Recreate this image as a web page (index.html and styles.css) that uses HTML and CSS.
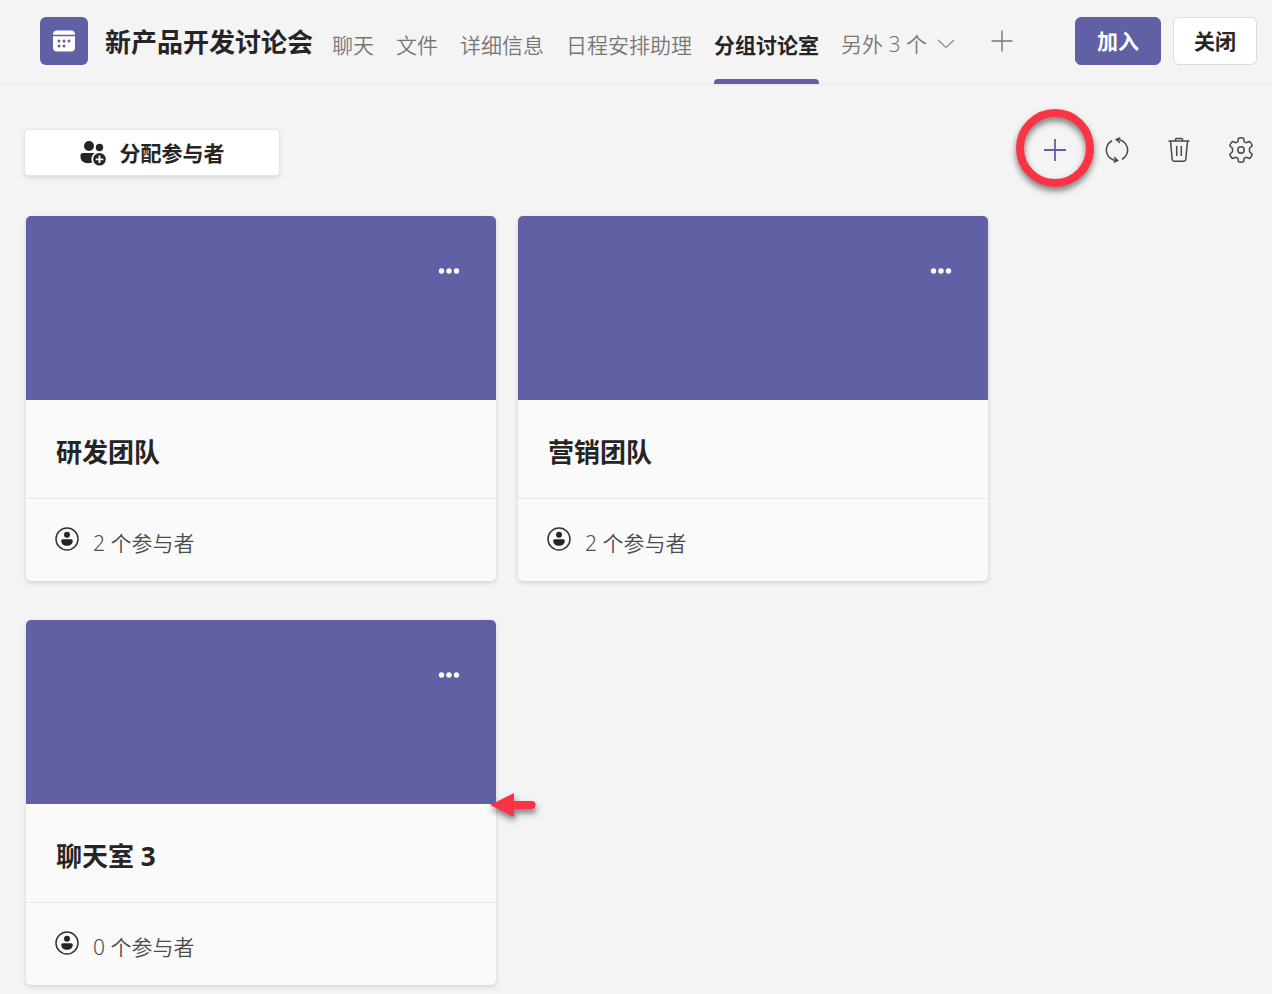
FILE: index.html
```html
<!DOCTYPE html>
<html lang="zh-CN">
<head>
<meta charset="utf-8">
<meta name="viewport" content="width=device-width, initial-scale=1">
<title>新产品开发讨论会</title>
<link rel="stylesheet" href="styles.css">
</head>
<body>
<header class="topbar">
  <span class="meeting-icon">
    <svg width="22" height="22" viewBox="0 0 22 22" aria-hidden="true">
      <path fill="#fff" d="M0 4.500A4 4 0 0 1 4 .5h14a4 4 0 0 1 4 4v.2H0zM0 6.200h22V17.500a4 4 0 0 1-4 4H4a4 4 0 0 1-4-4z"/>
      <g fill="#6260a5"><circle cx="6" cy="11" r="1.500"/><circle cx="11" cy="11" r="1.500"/><circle cx="16" cy="11" r="1.500"/><circle cx="6" cy="16" r="1.500"/><circle cx="11" cy="16" r="1.500"/></g>
    </svg>
  </span>
  <h1 class="meeting-title">新产品开发讨论会</h1>
  <nav class="tabs">
    <a class="tab" href="#chat">聊天</a>
    <a class="tab" href="#files">文件</a>
    <a class="tab" href="#details">详细信息</a>
    <a class="tab" href="#scheduling">日程安排助理</a>
    <a class="tab tab-active" href="#rooms" aria-current="page">分组讨论室</a>
    <button class="tab tab-more" type="button">另外 3 个
      <svg width="18" height="10" viewBox="0 0 18 10" aria-hidden="true"><path d="M1 1l8 7.500L17 1" fill="none" stroke="#8a8a8a" stroke-width="1.200"/></svg>
    </button>
  </nav>
  <button class="add-tab" type="button" aria-label="添加选项卡">
    <svg width="22" height="22" viewBox="0 0 22 22" aria-hidden="true"><path d="M11 .5v21M.5 11h21" stroke="#777" stroke-width="1.400"/></svg>
  </button>
  <div class="actions">
    <button class="btn btn-primary" type="button">加入</button>
    <button class="btn" type="button">关闭</button>
  </div>
</header>
<main class="content">
  <div class="toolbar">
    <button class="assign" type="button">
      <svg width="26" height="26" viewBox="0 0 26 26" aria-hidden="true" fill="#252525">
        <circle cx="9" cy="6" r="5"/><circle cx="19.500" cy="7.500" r="3.700"/>
        <path d="M3 13h11.500a7.500 7.500 0 0 0-2.300 9.600C6 24.500.5 22 .5 17v-1.500A2.500 2.500 0 0 1 3 13z"/>
        <path fill-rule="evenodd" d="M19.500 13a6.300 6.300 0 1 1 0 12.600 6.300 6.300 0 0 1 0-12.600zM18.600 15.500v2.900h-2.900v1.800h2.900v2.900h1.800v-2.900h2.900v-1.800h-2.900v-2.900z"/>
      </svg>
      <span>分配参与者</span>
    </button>
    <div class="tools">
      <button class="tool tool-marked" type="button" aria-label="添加讨论室">
        <svg width="24" height="24" viewBox="0 0 24 24" aria-hidden="true"><path d="M12 1v22M1 12h22" stroke="#6260a5" stroke-width="1.800"/></svg>
        <span class="ring"></span>
      </button>
      <button class="tool" type="button" aria-label="重新创建">
        <svg width="24" height="26" viewBox="0 0 24 26" aria-hidden="true" fill="none" stroke="#484848" stroke-width="1.500" stroke-linecap="round"><path d="M6.500 4A10.500 10.500 0 0 0 12.500 23.500M9.500 20.500l3.200 3-3.500 1.700M17.500 22A10.500 10.500 0 0 0 11.500 2.500M14.500 5.500l-3.200-3 3.500-1.700"/></svg>
      </button>
      <button class="tool" type="button" aria-label="删除讨论室">
        <svg width="24" height="26" viewBox="0 0 24 26" aria-hidden="true" fill="none" stroke="#484848" stroke-width="1.500" stroke-linejoin="round"><path d="M1.500 4h21M8.500 4V2.500A1 1 0 0 1 9.500 1.500h5a1 1 0 0 1 1 1V4M3.500 4l1.700 18.500A2 2 0 0 0 7.200 24.300h9.600a2 2 0 0 0 2-1.800L20.500 4M9.700 9v10M14.300 9v10"/></svg>
      </button>
      <button class="tool" type="button" aria-label="讨论室设置">
        <svg width="26" height="26" viewBox="0 0 26 26" aria-hidden="true" fill="none" stroke="#484848" stroke-width="1.500" stroke-linejoin="round"><path d="M10.500 1.200Q13 .5 15.500 1.200L16.200 4.800 18 5.700 21.700 4.500Q23.500 6.300 24.200 8.800L21.500 11.300V14.700L24.200 17.200Q23.500 19.700 21.700 21.500L18 20.300 16.200 21.200 15.500 24.800Q13 25.500 10.500 24.800L9.800 21.200 8 20.300 4.300 21.500Q2.500 19.700 1.800 17.200L4.500 14.700V11.300L1.800 8.800Q2.500 6.300 4.300 4.500L8 5.700 9.800 4.800z"/><circle cx="13" cy="13" r="3.200"/></svg>
      </button>
    </div>
  </div>
  <section class="rooms">
    <article class="room">
      <div class="cover"><button class="more" type="button" aria-label="更多选项"><svg width="22" height="6" viewBox="0 0 22 6" aria-hidden="true" fill="#fff"><circle cx="3.500" cy="3" r="2.700"/><circle cx="11" cy="3" r="2.700"/><circle cx="18.500" cy="3" r="2.700"/></svg></button></div>
      <h2 class="room-name">研发团队</h2>
      <p class="people"><svg width="24" height="24" viewBox="0 0 24 24" aria-hidden="true"><circle cx="12" cy="12" r="11" fill="none" stroke="#333" stroke-width="1.500"/><circle cx="12" cy="7.800" r="3" fill="#252525"/><path fill="#252525" d="M7.800 12.200h8.400a1.600 1.600 0 0 1 1.600 1.600c0 3-2.400 5-5.800 5s-5.800-2-5.800-5a1.600 1.600 0 0 1 1.600-1.600z"/></svg><span class="count">2 个参与者</span></p>
    </article>
    <article class="room">
      <div class="cover"><button class="more" type="button" aria-label="更多选项"><svg width="22" height="6" viewBox="0 0 22 6" aria-hidden="true" fill="#fff"><circle cx="3.500" cy="3" r="2.700"/><circle cx="11" cy="3" r="2.700"/><circle cx="18.500" cy="3" r="2.700"/></svg></button></div>
      <h2 class="room-name">营销团队</h2>
      <p class="people"><svg width="24" height="24" viewBox="0 0 24 24" aria-hidden="true"><circle cx="12" cy="12" r="11" fill="none" stroke="#333" stroke-width="1.500"/><circle cx="12" cy="7.800" r="3" fill="#252525"/><path fill="#252525" d="M7.800 12.200h8.400a1.600 1.600 0 0 1 1.600 1.600c0 3-2.400 5-5.800 5s-5.800-2-5.800-5a1.600 1.600 0 0 1 1.600-1.600z"/></svg><span class="count">2 个参与者</span></p>
    </article>
    <article class="room">
      <div class="cover"><button class="more" type="button" aria-label="更多选项"><svg width="22" height="6" viewBox="0 0 22 6" aria-hidden="true" fill="#fff"><circle cx="3.500" cy="3" r="2.700"/><circle cx="11" cy="3" r="2.700"/><circle cx="18.500" cy="3" r="2.700"/></svg></button></div>
      <h2 class="room-name">聊天室 3</h2>
      <p class="people"><svg width="24" height="24" viewBox="0 0 24 24" aria-hidden="true"><circle cx="12" cy="12" r="11" fill="none" stroke="#333" stroke-width="1.500"/><circle cx="12" cy="7.800" r="3" fill="#252525"/><path fill="#252525" d="M7.800 12.200h8.400a1.600 1.600 0 0 1 1.600 1.600c0 3-2.400 5-5.800 5s-5.800-2-5.800-5a1.600 1.600 0 0 1 1.600-1.600z"/></svg><span class="count">0 个参与者</span></p>
      <svg class="pointer" width="46" height="26" viewBox="0 0 46 26" aria-hidden="true"><path fill="#fa3445" d="M0 13L24 1v8h17.500a4 4 0 0 1 0 8H24v8z"/></svg>
    </article>
  </section>
</main>
</body>
</html>
```
FILE: styles.css
```css
* { box-sizing: border-box; }

body {
  margin: 0;
  background: #f5f4f5;
  color: #252525;
  font-family: "Noto Sans", "Noto Sans CJK SC", sans-serif;
  font-size: 21px;
  line-height: 28px;
}

button {
  margin: 0;
  padding: 0;
  border: 0;
  background: none;
  color: inherit;
  font: inherit;
  cursor: pointer;
}

svg { display: block; flex: none; }

.topbar {
  display: flex;
  align-items: center;
  min-height: 85px;
  padding: 0 15px 2px 40px;
  border-bottom: 1px solid #e9e7e9;
}

.meeting-icon {
  display: grid;
  place-items: center;
  width: 48px;
  height: 48px;
  flex: none;
  border-radius: 6px;
  background: #6260a5;
}

.meeting-title {
  margin: 0 19px 0 17px;
  padding-top: 2px;
  font-size: 26px;
  line-height: 36px;
  font-weight: 700;
  white-space: nowrap;
}

.tabs {
  display: flex;
  align-self: stretch;
  gap: 22px;
  margin-bottom: -2px;
}

.tab {
  position: relative;
  display: flex;
  align-items: center;
  padding-top: 5px;
  color: #777677;
  font-weight: 350;
  text-decoration: none;
  white-space: nowrap;
}

.tab-active {
  color: #252525;
  font-weight: 700;
}

.tab-active::after {
  content: "";
  position: absolute;
  left: 0;
  right: 0;
  bottom: 0;
  height: 5px;
  border-radius: 4px 4px 0 0;
  background: #6260a5;
}

.tab-more {
  gap: 10px;
  padding-top: 4px;
}

.add-tab { margin-left: 36px; }

.actions {
  display: flex;
  gap: 12px;
  margin-left: auto;
}

.btn {
  width: 84px;
  height: 48px;
  border: 1px solid #dddcdd;
  border-radius: 6px;
  background: #fff;
  font-weight: 700;
}

.btn-primary {
  width: 86px;
  border-color: #6260a5;
  background: #6260a5;
  color: #fff;
}

.content { padding: 44px 15px 8px 24px; }

.toolbar {
  display: flex;
  justify-content: space-between;
  align-items: flex-start;
}

.assign {
  display: flex;
  align-items: center;
  justify-content: center;
  gap: 14px;
  width: 256px;
  height: 47px;
  border: 1px solid #e6e5e6;
  border-radius: 4px;
  background: #fff;
  box-shadow: 0 2px 4px rgba(0, 0, 0, 0.1);
  font-weight: 700;
}

.tools { display: flex; gap: 30px; }

.tool {
  position: relative;
  display: grid;
  place-items: center;
  width: 32px;
  height: 42px;
}

.ring {
  position: absolute;
  top: -20px;
  left: -23px;
  width: 78px;
  height: 78px;
  border: 8px solid #fa3445;
  border-radius: 50%;
  filter: drop-shadow(0 4px 3px rgba(0, 0, 0, 0.5));
}

.rooms {
  display: grid;
  grid-template-columns: repeat(auto-fill, minmax(min(100%, 470px), 470px));
  gap: 39px 22px;
  margin: 40px 0 0 2px;
}

.room {
  position: relative;
  border-radius: 5px;
  background: #fafafa;
  box-shadow: 0 2px 5px rgba(0, 0, 0, 0.14);
}

.cover {
  display: flex;
  align-items: flex-start;
  justify-content: flex-end;
  height: 184px;
  padding: 44px 36px;
  border-radius: 5px 5px 0 0;
  background: #6260a5;
}

.more {
  display: grid;
  place-items: center;
  height: 22px;
}

.room-name {
  margin: 0;
  padding: 34px 30px 28px;
  border-bottom: 1px solid #e9e8e9;
  font-size: 26px;
  line-height: 36px;
  font-weight: 700;
}

.people {
  display: flex;
  gap: 14px;
  margin: 0;
  padding: 28px 29px 24px;
  color: #4c4c4c;
  font-weight: 350;
}

.count { padding-top: 2px; }

.pointer {
  position: absolute;
  top: 172px;
  right: -40px;
  filter: drop-shadow(1px 4px 3px rgba(0, 0, 0, 0.5));
}
```
